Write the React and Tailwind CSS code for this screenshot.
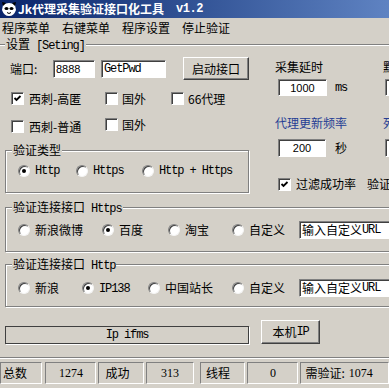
import React from "react";

const mono = "font-['Liberation_Mono',monospace] text-[12px] tracking-[-1.1px]";
const sans = "font-['Liberation_Sans',sans-serif] text-[11px]";
const serif = "font-['Liberation_Serif',serif] text-[12px]";

const sunken =
  "bg-white border border-t-[#808080] border-l-[#808080] border-r-white border-b-white shadow-[inset_1px_1px_0_#404040]";
const raised =
  "bg-[#d4d0c8] border border-t-white border-l-white border-r-[#404040] border-b-[#404040] shadow-[inset_-1px_-1px_0_#808080]";
const panel = "border border-t-[#808080] border-l-[#808080] border-r-white border-b-white";

function Check({ checked }) {
  return (
    <span className={"inline-flex w-[13px] h-[13px] shrink-0 items-center justify-center " + sunken}>
      {checked && (
        <svg width="9" height="9" viewBox="0 0 9 9">
          <path d="M1.5 4 L3.5 6 L7.5 2" stroke="#000" strokeWidth="1.8" fill="none" />
        </svg>
      )}
    </span>
  );
}

function Radio({ on }) {
  return (
    <span className="inline-flex w-[12px] h-[12px] shrink-0 items-center justify-center rounded-full bg-white border border-t-[#808080] border-l-[#808080] border-r-[#f4f4f4] border-b-[#f4f4f4] shadow-[inset_1px_1px_0_#404040]">
      {on && <span className="w-[4px] h-[4px] rounded-full bg-black" />}
    </span>
  );
}

function Opt({ on, w, children }) {
  return (
    <div className={"flex items-center gap-[5px] shrink-0 " + w}>
      <Radio on={on} />
      <span>{children}</span>
    </div>
  );
}

function Group({ label, className, children }) {
  return (
    <fieldset className={"border border-[#808080] shadow-[inset_1px_1px_0_#fff,1px_1px_0_#fff] " + className}>
      <legend className="ml-[6px] px-[1px] h-[14px] leading-[14px] bg-[#d4d0c8]">{label}</legend>
      {children}
    </fieldset>
  );
}

function UrlBox() {
  return (
    <div className={"w-[100px] h-[18px] flex items-center pl-[2px] shrink-0 " + sunken}>
      <span>输入自定义</span>
      <span className={mono}>URL</span>
    </div>
  );
}

export default function App() {
  return (
    <div className="w-[389px] h-[388px] overflow-hidden bg-[#d4d0c8] text-black text-[12px] leading-[14px] font-['Noto_Sans_CJK_SC',sans-serif]">
      {/* title bar */}
      <div className="h-[18px] flex items-center bg-linear-to-r from-[#0a246a] to-[#5f83c2] text-white font-bold whitespace-nowrap">
        <svg className="ml-[1px]" width="16" height="16" viewBox="0 0 16 16">
          <path d="M2 4 Q8 0 14 4 L15 9 Q13 15 8 15 Q3 15 1 9Z" fill="#fff" />
          <path d="M1 1 L5 2 L2 5Z M15 1 L11 2 L14 5Z" fill="#000" />
          <ellipse cx="5.5" cy="7.5" rx="2" ry="1.6" fill="#000" />
          <ellipse cx="10.5" cy="7.5" rx="2" ry="1.6" fill="#000" />
          <path d="M6 11.5 Q8 13.5 10 11.5" stroke="#000" fill="none" />
        </svg>
        <span className="ml-[1px]">Jk代理采集验证接口化工具</span>
        <span className="ml-[12px] font-['Liberation_Mono',monospace] text-[12px] tracking-[-0.5px]">v1.2</span>
      </div>

      {/* menu */}
      <div className="h-[19px] flex items-center gap-[12px] pl-[2px] whitespace-nowrap">
        <span>程序菜单</span>
        <span>右键菜单</span>
        <span>程序设置</span>
        <span>停止验证</span>
      </div>

      <fieldset className="border-t border-[#808080] shadow-[inset_0_1px_0_#fff]">
        <legend className="ml-[5px] px-[1px] h-[14px] leading-[14px] bg-[#d4d0c8] whitespace-nowrap">
          设置<span className={"ml-[6px] " + mono}>[Seting]</span>
        </legend>

        <div className="flex whitespace-nowrap">
          {/* left column */}
          <div className="w-[275px] shrink-0">
            <div className="mt-[6px] h-[23px] flex items-center pl-[10px]">
              <span className="w-[43px]">端口:</span>
              <div className={"w-[42px] h-[18px] flex items-center pl-[2px] " + sunken}>
                <span className={sans}>8888</span>
              </div>
              <div className={"ml-[6px] w-[65px] h-[18px] flex items-center pl-[2px] " + sunken}>
                <span className={mono}>GetPwd</span>
              </div>
              <div className={"ml-[17px] w-[66px] h-[23px] flex items-center justify-center " + raised}>启动接口</div>
            </div>

            <div className="mt-[12px] h-[13px] flex items-center pl-[11px]">
              <div className="w-[94px] flex items-center gap-[5px]">
                <Check checked />
                <span>西刺-高匿</span>
              </div>
              <div className="w-[66px] flex items-center gap-[4px]">
                <Check />
                <span>国外</span>
              </div>
              <div className="flex items-center gap-[4px]">
                <Check />
                <span>66代理</span>
              </div>
            </div>

            <div className="mt-[15px] h-[13px] flex items-center pl-[11px]">
              <div className="w-[94px] flex items-center gap-[5px]">
                <Check />
                <span>西刺-普通</span>
              </div>
              <div className="flex items-center gap-[4px] -mt-[4px]">
                <Check />
                <span>国外</span>
              </div>
            </div>

            <Group label="验证类型" className="mt-[10px] ml-[5px] w-[244px]">
              <div className={"pt-[8px] pb-[15px] pl-[12px] h-[35px] flex items-start " + mono}>
                <Opt on w="w-[58px] h-[12px]">Http</Opt>
                <Opt w="w-[66px] h-[12px]">Https</Opt>
                <Opt w="h-[12px]">Http + Https</Opt>
              </div>
            </Group>
          </div>

          {/* right column */}
          <div className="shrink-0">
            <div className="mt-[9px] h-[14px] flex">
              <span className="w-[108px]">采集延时</span>
              <span>默</span>
            </div>
            <div className="mt-[5px] h-[17px] flex items-center">
              <div className="w-[108px] flex items-center">
                <div className={"ml-[3px] w-[49px] h-[17px] flex items-center justify-center " + sunken}>
                  <span className={sans}>1000</span>
                </div>
                <span className={"ml-[8px] " + mono}>ms</span>
              </div>
              <div className={"ml-[2px] w-[30px] h-[17px] " + sunken} />
            </div>
            <div className="mt-[20px] h-[14px] flex">
              <span className="w-[108px] text-[#253d94]">代理更新频率</span>
              <span className="text-[#253d94]">死</span>
            </div>
            <div className="mt-[9px] h-[18px] flex items-center">
              <div className="w-[108px] flex items-center">
                <div className={"ml-[3px] w-[48px] h-[18px] flex items-center justify-center " + sunken}>
                  <span className={sans}>200</span>
                </div>
                <span className="ml-[9px]">秒</span>
              </div>
              <div className={"ml-[2px] w-[30px] h-[18px] " + sunken} />
            </div>
            <div className="mt-[20px] h-[13px] flex items-center">
              <div className="w-[92px] flex items-center">
                <span className="ml-[3px]">
                  <Check checked />
                </span>
                <span className="ml-[5px]">过滤成功率</span>
              </div>
              <span>验证</span>
            </div>
          </div>
        </div>

        <Group
          label={
            <span className="whitespace-nowrap">
              验证连接接口<span className={"ml-[6px] " + mono}>Https</span>
            </span>
          }
          className="mt-[7px] ml-[5px] w-[420px]"
        >
          <div className="pt-[7px] pb-[12px] pl-[12px] flex items-center whitespace-nowrap">
            <div className="h-[18px] flex items-center">
              <Opt w="w-[84px]">新浪微博</Opt>
              <Opt on w="w-[66px]">百度</Opt>
              <Opt w="w-[64px]">淘宝</Opt>
              <Opt w="w-[67px]">自定义</Opt>
              <UrlBox />
            </div>
          </div>
        </Group>

        <Group
          label={
            <span className="whitespace-nowrap">
              验证连接接口<span className={"ml-[6px] " + mono}>Http</span>
            </span>
          }
          className="mt-[5px] ml-[5px] w-[420px]"
        >
          <div className="pt-[8px] pb-[9px] pl-[12px] flex items-center whitespace-nowrap">
            <div className="h-[18px] flex items-center">
              <Opt w="w-[64px]">新浪</Opt>
              <Opt on w="w-[66px]">
                <span className={mono}>IP138</span>
              </Opt>
              <Opt w="w-[84px]">中国站长</Opt>
              <Opt w="w-[67px]">自定义</Opt>
              <UrlBox />
            </div>
          </div>
        </Group>

        <div className="mt-[13px] h-[24px] flex items-start">
          <div className="mt-[6px] ml-[5px] w-[244px] h-[18px] flex items-center justify-center border border-[#404040] shadow-[1px_1px_0_#fff]">
            <span className={mono}>Ip ifms</span>
          </div>
          <div className={"ml-[12px] w-[59px] h-[24px] flex items-center justify-center " + raised}>
            <span>本机</span>
            <span className={mono}>IP</span>
          </div>
        </div>
      </fieldset>

      {/* status bar */}
      <div className="mt-[13px] h-[2px] border-t border-[#808080] border-b border-b-white" />
      <div className="mt-[3px] h-[22px] flex whitespace-nowrap">
        <div className={"w-[43px] flex items-center pl-[2px] " + panel}>总数</div>
        <div className={"ml-[3px] w-[52px] flex items-center justify-center " + panel + " " + serif}>1274</div>
        <div className={"ml-[2px] w-[46px] flex items-center pl-[6px] " + panel}>成功</div>
        <div className={"ml-[2px] w-[49px] flex items-center justify-center " + panel + " " + serif}>313</div>
        <div className={"ml-[6px] w-[46px] flex items-center pl-[5px] " + panel}>线程</div>
        <div className={"ml-[2px] w-[52px] flex items-center justify-center " + panel + " " + serif}>0</div>
        <div className={"ml-[2px] w-[90px] flex items-center pl-[4px] " + panel}>
          <span>需验证:</span>
          <span className={"ml-[4px] " + serif}>1074</span>
        </div>
      </div>
    </div>
  );
}
